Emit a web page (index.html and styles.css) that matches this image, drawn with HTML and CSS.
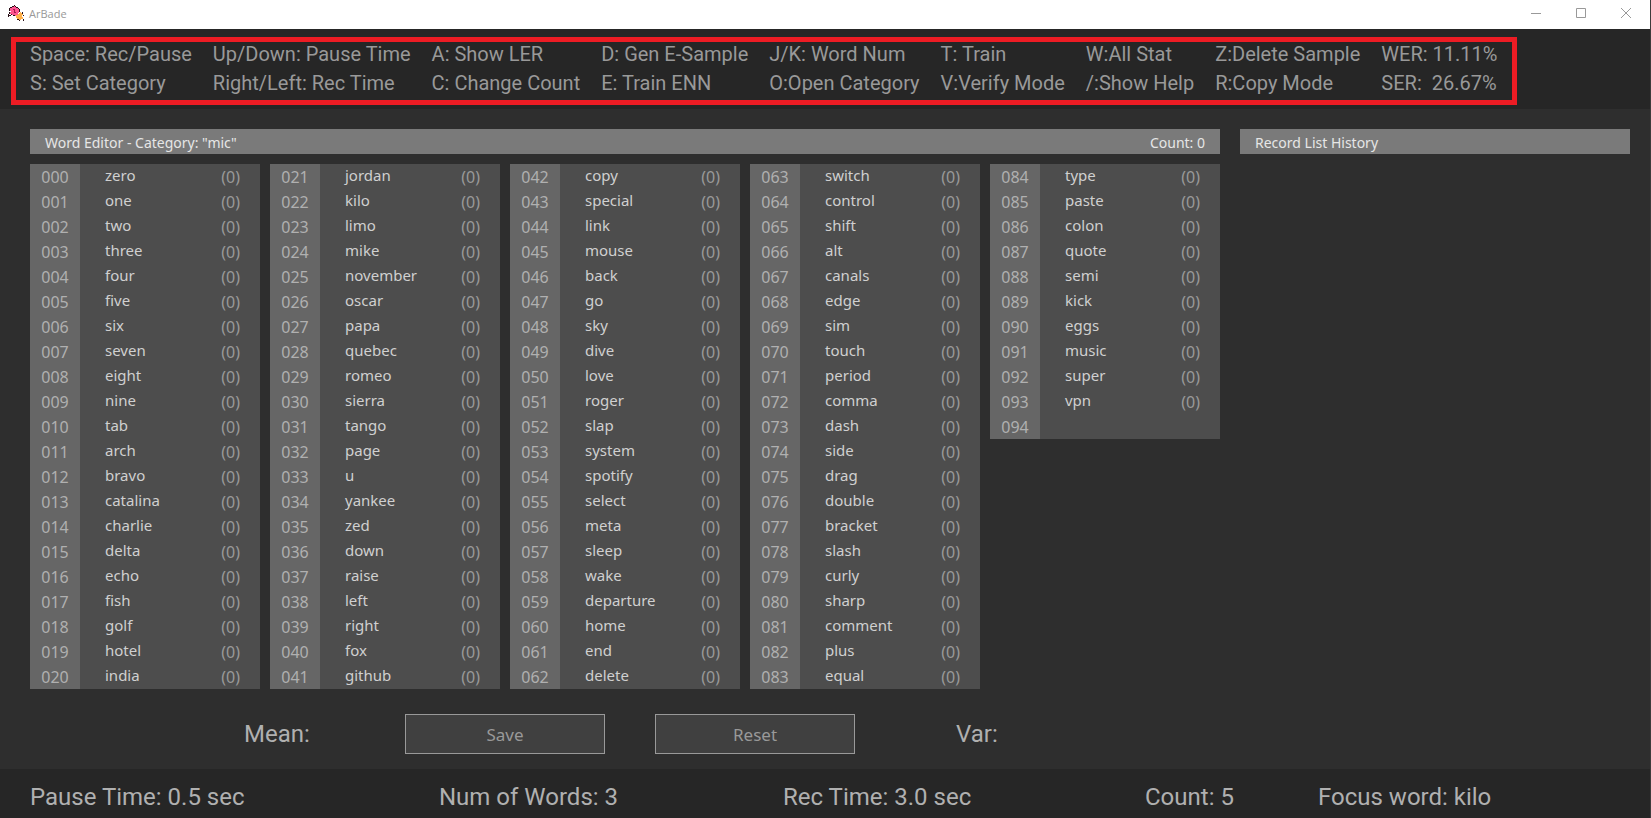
FILE: index.html
```html
<!DOCTYPE html>
<html lang="en">
<head>
<meta charset="utf-8">
<title>ArBade</title>
<link rel="stylesheet" href="styles.css">
</head>
<body>
<div class="window">
  <header class="titlebar">
    <svg class="app-icon" viewBox="0 0 16 16" aria-hidden="true">
      <path fill="#2a1018" d="M6 0h1v1H6zM4 1h2v1H4zM7 1h1v1H7zM8 2h2v1H8zM2 2h2v1H2zM10 3h1v1h-1zM1 3h1v3H1zM11 4h1v3h-1zM12 7h1v1h-1zM1 7h1v2H1zM0 9h1v3H0zM1 10h2v1H1zM3 9h1v1H3zM5 10h3v1H5zM14 7h1v2h-1zM15 10h1v1h-1zM15 14h1v2h-1zM8 12h1v1H8zM9 14h2v1H9zM11 15h1v1h-1z"/>
      <path fill="#ff5590" d="M6 1h1v1h1v1h2v1h1v4h-1v2H8v1H7v-1H4V9H2V7h1V6H2V3h2V2h2z"/>
      <path fill="#a81c50" d="M5 4h2v3h1v1H6V5H5z"/>
      <path fill="#ffb04a" d="M11 8h1V7h1v1h1v1h1v1h-1v2h1v2h-2v1h-2v-1H9v-1H8v-3h2V9h1z"/>
    </svg>
    <span class="app-name">ArBade</span>
    <div class="window-controls">
      <button class="window-button" aria-label="Minimize"><svg viewBox="0 0 10 10"><path d="M0 5.5h10"/></svg></button>
      <button class="window-button" aria-label="Maximize"><svg viewBox="0 0 10 10"><path d="M.5.5h9v9h-9z"/></svg></button>
      <button class="window-button" aria-label="Close"><svg viewBox="0 0 10 10"><path d="M0 0l10 10M10 0L0 10"/></svg></button>
    </div>
  </header>

  <section class="help">
    <div class="shortcuts">
      <div><p>Space: Rec/Pause</p><p>S: Set Category</p></div>
      <div><p>Up/Down: Pause Time</p><p>Right/Left: Rec Time</p></div>
      <div><p>A: Show LER</p><p>C: Change Count</p></div>
      <div><p>D: Gen E-Sample</p><p>E: Train ENN</p></div>
      <div><p>J/K: Word Num</p><p>O:Open Category</p></div>
      <div><p>T: Train</p><p>V:Verify Mode</p></div>
      <div><p>W:All Stat</p><p>/:Show Help</p></div>
      <div><p>Z:Delete Sample</p><p>R:Copy Mode</p></div>
      <div><p>WER: 11.11%</p><p>SER:&nbsp; 26.67%</p></div>
    </div>
  </section>

  <main class="workspace">
    <section class="editor">
      <h2 class="panel-title"><span>Word Editor - Category: "mic"</span><span>Count: 0</span></h2>
      <div class="groups" id="groups"></div>
      <div class="actions">
        <span class="stat stat-mean">Mean:</span>
        <button class="action">Save</button>
        <button class="action">Reset</button>
        <span class="stat stat-var">Var:</span>
      </div>
    </section>
    <section class="history">
      <h2 class="panel-title">Record List History</h2>
    </section>
  </main>

  <footer class="status">
    <span>Pause Time: 0.5 sec</span>
    <span>Num of Words: 3</span>
    <span>Rec Time: 3.0 sec</span>
    <span>Count: 5</span>
    <span>Focus word: kilo</span>
  </footer>
</div>
<script src="app.js"></script>
</body>
</html>
```
FILE: styles.css
```css
* { box-sizing: border-box; }

body {
  margin: 0;
  background: #2e2e2e;
  color: #b0b0b0;
  font-family: Roboto, "Liberation Sans", sans-serif;
}

p, h2 { margin: 0; font-weight: 400; }
button { font: inherit; }

.window {
  display: flex;
  flex-direction: column;
  min-height: 100vh;
  border-right: 1px solid #3c3c3c;
}

.titlebar {
  display: flex;
  align-items: center;
  height: 29px;
  padding: 0 2px 3px 8px;
  background: #fff;
}
.app-icon { width: 16px; height: 16px; shape-rendering: crispEdges; }
.app-name {
  margin-left: 5px;
  color: #999;
  font-family: "Open Sans", sans-serif;
  font-size: 11px;
}
.window-controls { display: flex; margin-left: auto; }
.window-button {
  display: grid;
  place-items: center;
  width: 45px;
  height: 26px;
  padding: 0;
  border: 0;
  background: none;
}
.window-button svg { width: 10px; height: 10px; fill: none; stroke: #999; }

.help {
  height: 80px;
  padding: 8px 11px 0;
  background: #262626;
}
.shortcuts {
  display: flex;
  gap: 21px;
  width: max-content;
  height: 68px;
  padding: 0 15px 0 14px;
  border: 5px solid #ed1c24;
  color: #999;
  font-size: 20px;
  line-height: 29px;
  white-space: nowrap;
}
.shortcuts p:first-child { line-height: 25px; }
.shortcuts p:last-child { line-height: 33px; }

.workspace {
  display: grid;
  grid-template-columns: 1190px minmax(0, 1fr);
  gap: 20px;
  flex: 1;
  padding: 20px 20px 15px 30px;
}
.panel-title {
  display: flex;
  justify-content: space-between;
  height: 25px;
  padding: 0 15px;
  background: #7a7a7a;
  color: #e6e6e6;
  font-family: "Noto Sans", sans-serif;
  font-size: 14px;
  line-height: 27px;
}

.groups {
  display: grid;
  grid-template-columns: repeat(5, 1fr);
  gap: 10px;
  align-items: start;
  margin-top: 10px;
}
.words {
  width: 100%;
  border-collapse: collapse;
  table-layout: fixed;
  background: #4d4d4d;
  font-family: "Noto Sans", sans-serif;
  font-size: 15px;
}
.words th, .words td { height: 25px; padding: 0; line-height: 22px; text-align: left; }
.words .index {
  width: 50px;
  padding-top: 1px;
  background: #666;
  color: #b0b0b0;
  font-size: 16px;
  font-weight: 400;
  text-align: center;
}
.words .word { padding-left: 25px; padding-bottom: 3px; color: #d0d0d0; }
.words .count { width: 60px; padding: 1px 20px 0 0; color: #999; font-size: 16px; text-align: right; }

.actions {
  display: flex;
  align-items: center;
  gap: 50px;
  margin-top: 25px;
  padding-left: 214px;
}
.stat { font-size: 24px; line-height: 28px; }
.stat-mean { width: 111px; }
.stat-var { padding-left: 51px; }
.action {
  width: 200px;
  height: 40px;
  border: 1px solid #999;
  background: #404040;
  color: #999;
  font-family: "Noto Sans", sans-serif;
  font-size: 17px;
}

.status {
  display: grid;
  grid-template-columns: 409fr 344fr 362fr 173fr 332fr;
  height: 49px;
  padding-left: 30px;
  background: #262626;
  font-size: 24px;
  line-height: 56px;
  white-space: nowrap;
}
```
FILE: app.js
```js
const groups = [
  "zero one two three four five six seven eight nine tab arch bravo catalina charlie delta echo fish golf hotel india",
  "jordan kilo limo mike november oscar papa quebec romeo sierra tango page u yankee zed down raise left right fox github",
  "copy special link mouse back go sky dive love roger slap system spotify select meta sleep wake departure home end delete",
  "switch control shift alt canals edge sim touch period comma dash side drag double bracket slash curly sharp comment plus equal",
  "type paste colon quote semi kick eggs music super vpn"
].map(line => line.split(" "));

// The last row stays empty for the next word.
groups[groups.length - 1].push("");

let index = 0;
document.getElementById("groups").innerHTML = groups.map(words => {
  const rows = words.map(word => {
    const id = String(index++).padStart(3, "0");
    return `<tr><th class="index" scope="row">${id}</th><td class="word">${word}</td><td class="count">${word ? "(0)" : ""}</td></tr>`;
  });
  return `<table class="words"><tbody>${rows.join("")}</tbody></table>`;
}).join("");
```
